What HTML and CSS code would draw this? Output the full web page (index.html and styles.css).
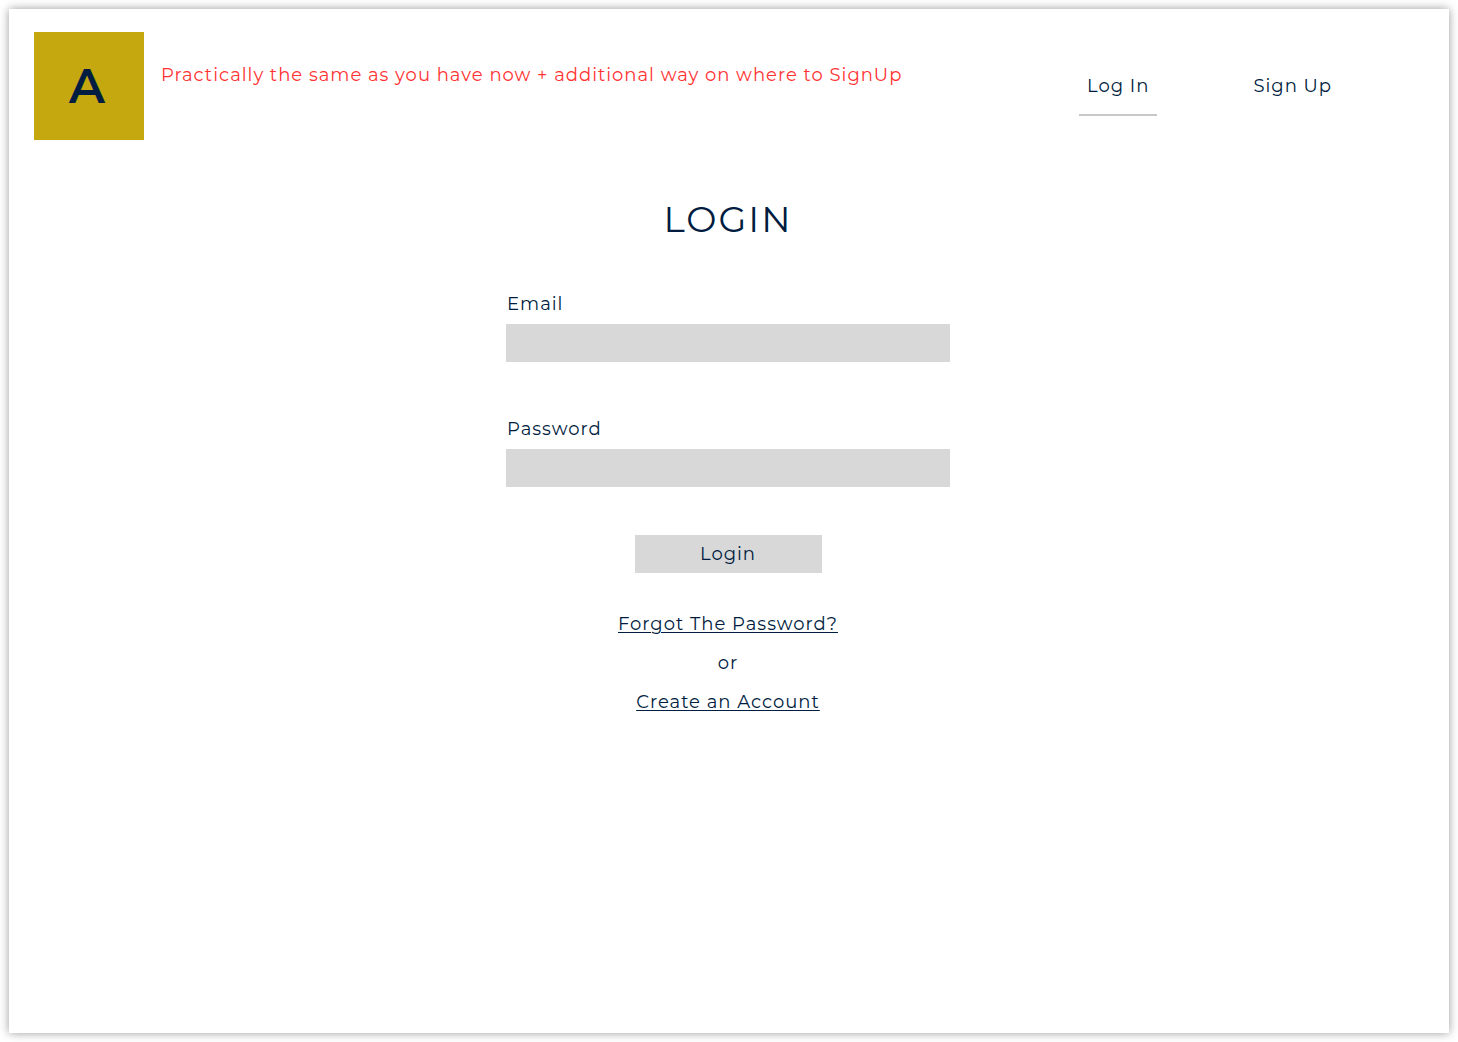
FILE: index.html
```html
<!DOCTYPE html>
<html lang="en">
<head>
  <meta charset="UTF-8">
  <meta name="viewport" content="width=device-width, initial-scale=1.0">
  <title>Login</title>
  <link rel="stylesheet" href="styles.css">
</head>
<body>
  <div class="page">
    <header class="header">
      <a href="#" class="logo">A</a>
      <p class="note">Practically the same as you have now + additional way on where to SignUp</p>
      <nav class="nav">
        <a href="#" class="nav-link active">Log In</a>
        <a href="#" class="nav-link">Sign Up</a>
      </nav>
    </header>

    <main class="login">
      <h1>LOGIN</h1>
      <form class="login-form">
        <div class="field">
          <label for="email">Email</label>
          <input type="email" id="email" name="email">
        </div>
        <div class="field">
          <label for="password">Password</label>
          <input type="password" id="password" name="password">
        </div>
        <button type="submit">Login</button>
      </form>

      <div class="links">
        <a href="#">Forgot The Password?</a>
        <span>or</span>
        <a href="#">Create an Account</a>
      </div>
    </main>
  </div>
</body>
</html>
```
FILE: styles.css
```css
* {
  box-sizing: border-box;
}
body {
  margin: 0;
  padding: 9px;
  background: #fff;
  color: #001c40;
  font-family: Montserrat, Inter, sans-serif;
  font-size: 18px;
  font-weight: 400;
  line-height: 24px;
  letter-spacing: 1px;
}
a {
  color: inherit;
}
.page {
  min-height: calc(100vh - 18px);
  padding: 23px 25px;
  background: #fff;
  box-shadow: 0 0 9px rgba(0, 0, 0, 0.4);
}

/* HEADER */
.header {
  display: flex;
  align-items: center;
}
.logo {
  display: flex;
  flex-shrink: 0;
  align-items: center;
  justify-content: center;
  width: 110px;
  height: 108px;
  padding-right: 3px;
  background: #c5a70f;
  font-size: 48px;
  font-weight: 600;
  text-decoration: none;
}
.note {
  align-self: flex-start;
  margin: 31px 0 0 17px;
  color: #f33;
}
.nav {
  display: flex;
  flex-shrink: 0;
  gap: 88px;
  margin-left: auto;
  margin-right: 84px;
}
.nav-link {
  padding: 16px 8px;
  border: solid transparent;
  border-width: 2px 0;
  text-decoration: none;
}
.nav-link.active {
  border-bottom-color: #c8c8c8;
}

/* LOGIN */
.login {
  display: flex;
  flex-direction: column;
  align-items: center;
  padding-right: 2px;
}
.login h1 {
  margin: 57px 0 51px;
  font-size: 36px;
  font-weight: 400;
  line-height: 44px;
  letter-spacing: 2px;
}
.login-form {
  display: flex;
  flex-direction: column;
  align-items: center;
  width: 100%;
  max-width: 444px;
}
.field {
  display: flex;
  flex-direction: column;
  gap: 8px;
  width: 100%;
}
.field + .field {
  margin-top: 55px;
}
.field label {
  align-self: flex-start;
  padding-left: 1px;
}
input,
button {
  height: 38px;
  border: 0;
  border-radius: 0;
  background: #d8d8d8;
  color: inherit;
  font: inherit;
  letter-spacing: inherit;
}
input {
  padding: 0 12px;
}
button {
  width: 187px;
  margin-top: 48px;
  cursor: pointer;
}
.links {
  display: flex;
  flex-direction: column;
  align-items: center;
  gap: 15px;
  margin-top: 39px;
}
.links a {
  text-decoration-thickness: 1px;
  text-underline-offset: 2px;
}
```
